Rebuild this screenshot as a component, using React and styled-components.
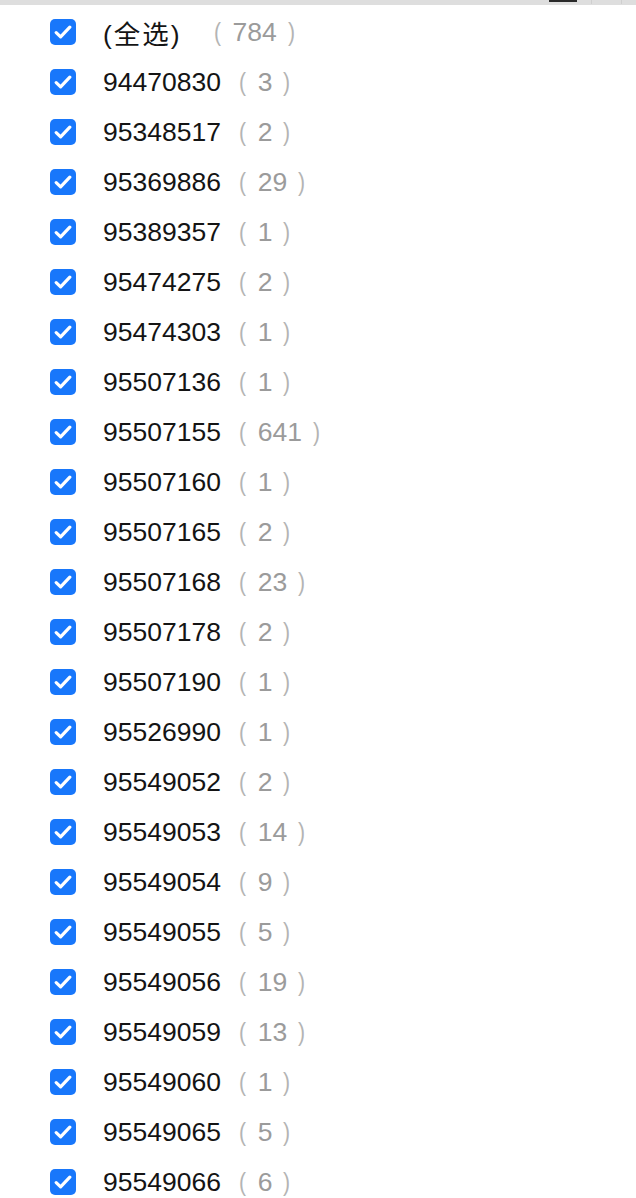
import styled, { createGlobalStyle } from "styled-components";

const items = [
  ["(全选)", 784],
  ["94470830", 3],
  ["95348517", 2],
  ["95369886", 29],
  ["95389357", 1],
  ["95474275", 2],
  ["95474303", 1],
  ["95507136", 1],
  ["95507155", 641],
  ["95507160", 1],
  ["95507165", 2],
  ["95507168", 23],
  ["95507178", 2],
  ["95507190", 1],
  ["95526990", 1],
  ["95549052", 2],
  ["95549053", 14],
  ["95549054", 9],
  ["95549055", 5],
  ["95549056", 19],
  ["95549059", 13],
  ["95549060", 1],
  ["95549065", 5],
  ["95549066", 6],
];

const GlobalStyle = createGlobalStyle`
  html, body {
    margin: 0;
    padding: 0;
    background: #fff;
    overflow: hidden;
  }
`;

export default function App() {
  return (
    <>
      <GlobalStyle />
      <Page>
        <TopBar>
          <BarHandle />
          <BarTick />
          <BarTick />
        </TopBar>
        <List>
          {items.map(([label, count], i) => (
            <Row key={i}>
              <Box>
                <svg width="18" height="14" viewBox="0 0 18 14">
                  <path
                    d="M2.2 7.6 L6.6 11.8 L15.8 2.2"
                    fill="none"
                    stroke="#fff"
                    strokeWidth="3.2"
                    strokeLinecap="round"
                    strokeLinejoin="round"
                  />
                </svg>
              </Box>
              <Label $all={i === 0}>{label}</Label>
              <Count $all={i === 0}>
                <Paren>(</Paren>
                <Num>{count}</Num>
                <Paren>)</Paren>
              </Count>
            </Row>
          ))}
        </List>
      </Page>
    </>
  );
}

const Page = styled.div`
  width: 636px;
  height: 1198px;
  overflow: hidden;
  font-family: "Liberation Sans", "Noto Sans CJK SC", sans-serif;
`;

const TopBar = styled.div`
  height: 5px;
  background: #dedede;
  display: flex;
  align-items: flex-start;
  padding-left: 549px;
`;

const BarHandle = styled.div`
  width: 28px;
  height: 2px;
  background: #2a2a2a;
`;

const BarTick = styled.div`
  width: 1px;
  height: 4px;
  margin-left: 14px;
  background: #cfcfcf;
  & + & {
    margin-left: 29px;
  }
`;

const List = styled.div`
  padding-top: 2px;
  display: flex;
  flex-direction: column;
`;

const Row = styled.div`
  height: 50px;
  display: flex;
  align-items: center;
  padding-left: 50px;
`;

const Box = styled.div`
  width: 26px;
  height: 26px;
  border-radius: 5px;
  background: #1877fb;
  display: flex;
  align-items: center;
  justify-content: center;
  flex-shrink: 0;
`;

const Label = styled.span`
  margin-left: 27px;
  font-size: 26.5px;
  color: #141414;
  letter-spacing: ${(p) => (p.$all ? "2px" : "0")};
`;

const Count = styled.span`
  display: flex;
  align-items: center;
  margin-left: ${(p) => (p.$all ? "31px" : "17px")};
  font-size: 26.5px;
  color: #9b9b9b;
`;

const Paren = styled.span`
  color: #b4b4b4;
  transform: scaleX(0.8);
`;

const Num = styled.span`
  padding: 0 10px 0 11px;
`;
